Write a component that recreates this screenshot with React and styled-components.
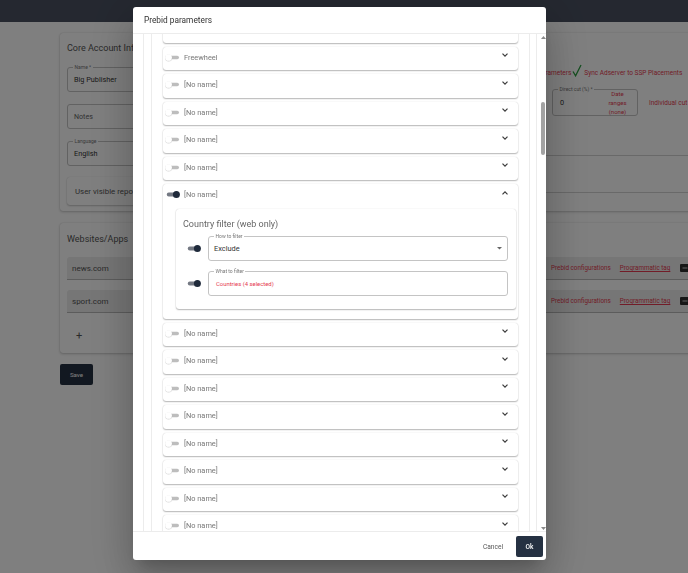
import React from 'react';
import styled, { createGlobalStyle } from 'styled-components';

const RED = '#e53950';

const GlobalStyle = createGlobalStyle`
  *, *::before, *::after { box-sizing: border-box; }
  html, body { margin: 0; padding: 0; background: #fff; overflow: hidden; }
  body { font-family: Roboto, "Liberation Sans", Arial, sans-serif; }
  button { font-family: inherit; cursor: pointer; }
`;

/* ---------- background page ---------- */
const Page = styled.div`
  width: 688px;
  height: 573px;
  overflow: hidden;
  background: #fff;
`;
const TopBar = styled.header`
  height: 22px;
  background: #4a5161;
`;
const Main = styled.main`
  display: flex;
  flex-direction: column;
  align-items: flex-start;
  padding: 11px 0 0 60px;
`;
const Card = styled.section`
  width: 760px;
  flex: none;
  margin-top: ${p => p.$mt || 0}px;
  padding: ${p => p.$pad};
  background: #fff;
  border-radius: 3px;
  box-shadow: 0 1px 3px rgba(0, 0, 0, 0.22), 0 0 1px rgba(0, 0, 0, 0.2);
`;
const CardTitle = styled.h2`
  margin: 0;
  font-size: 9px;
  line-height: 14px;
  font-weight: 400;
  color: #555;
`;
const CoreGrid = styled.div`
  display: grid;
  grid-template-columns: 445px 1fr;
  column-gap: 6px;
`;
const Column = styled.div`
  display: flex;
  flex-direction: column;
  align-items: stretch;
`;
const Outlined = styled.div`
  position: relative;
  flex: none;
  width: ${p => (p.$w ? `${p.$w}px` : 'auto')};
  height: ${p => p.$h || 25}px;
  margin-top: ${p => p.$mt || 0}px;
  padding: 0 ${p => p.$pr ?? 6}px 0 ${p => p.$pl ?? 6}px;
  display: flex;
  align-items: center;
  border: 1px solid #c4c4c4;
  border-radius: 3px;
  background: #fff;
`;
const FieldLabel = styled.span`
  position: absolute;
  top: -3.5px;
  left: 5px;
  padding: 0 1.5px;
  background: #fff;
  font-size: 5px;
  line-height: 5px;
  color: #777;
  white-space: nowrap;
`;
const FieldValue = styled.span`
  flex: 1;
  font-size: ${p => p.$size || 7.3}px;
  color: ${p => p.$color || '#333'};
  white-space: nowrap;
`;
const PaperRow = styled.div`
  margin-top: 11px;
  height: 28px;
  display: flex;
  align-items: center;
  padding-left: 8px;
  background: #fff;
  border-radius: 3px;
  box-shadow: 0 1px 2px rgba(0, 0, 0, 0.22), 0 0 1px rgba(0, 0, 0, 0.18);
  font-size: 7.9px;
  color: #555;
`;
const ActionRow = styled.div`
  margin-top: ${p => p.$mt || 0}px;
  height: ${p => p.$h}px;
  padding-left: ${p => p.$pl || 0}px;
  display: flex;
  align-items: center;
`;
const RedText = styled.a`
  font-size: ${p => p.$size || 6.5}px;
  color: ${RED};
  white-space: nowrap;
  margin-left: ${p => p.$ml || 0}px;
  margin-right: ${p => p.$mr || 0}px;
  text-decoration: ${p => (p.$u ? 'underline' : 'none')};
`;
const DateRanges = styled.span`
  width: 27px;
  font-size: 6px;
  line-height: 9.3px;
  text-align: center;
  color: ${RED};
`;
const SectionBand = styled.div`
  margin-top: 39px;
  height: 38px;
  border-top: 1px solid #d2d2d2;
  border-bottom: 1px solid #d2d2d2;
`;
const SiteRow = styled.div`
  height: 23px;
  margin-top: ${p => p.$mt}px;
  display: flex;
  align-items: center;
  padding-left: 5px;
  background: #ececec;
  border-radius: 3px 3px 0 0;
  border-bottom: 1px solid #b9b9b9;
`;
const SiteName = styled.span`
  width: 479px;
  flex: none;
  font-size: 8px;
  color: #555;
`;
const AddRow = styled.div`
  margin-top: 9px;
  height: 26px;
  display: flex;
  align-items: center;
  padding-left: 9px;
  font-size: 11px;
  color: #555;
`;
const SaveButton = styled.button`
  margin-top: 11px;
  width: 33px;
  height: 21px;
  padding: 0;
  border: 0;
  border-radius: 2px;
  background: #253142;
  color: #fff;
  font-size: 6.2px;
`;

/* ---------- dialog ---------- */
const Overlay = styled.div`
  position: fixed;
  inset: 0;
  background: rgba(0, 0, 0, 0.5);
  display: flex;
  align-items: flex-start;
  padding: 7px 0 0 133px;
`;
const Dialog = styled.div`
  width: 413px;
  height: 553px;
  display: flex;
  flex-direction: column;
  overflow: hidden;
  background: #fff;
  border-radius: 3px;
  box-shadow: 0 11px 15px -7px rgba(0, 0, 0, 0.2), 0 24px 38px 3px rgba(0, 0, 0, 0.14),
    0 9px 46px 8px rgba(0, 0, 0, 0.12);
`;
const DialogTitle = styled.h2`
  flex: none;
  margin: 0;
  height: 27px;
  display: flex;
  align-items: center;
  padding: 0 11px;
  font-size: 8.3px;
  font-weight: 400;
  color: #333;
  border-bottom: 1px solid #ececec;
`;
const DialogBody = styled.div`
  flex: 1;
  min-height: 0;
  display: flex;
`;
const Scroller = styled.div`
  flex: 1;
  min-width: 0;
  overflow: hidden;
  padding-left: 10px;
`;
const Frame = styled.div`
  margin-top: ${p => p.$mt || 0}px;
  padding: 0 ${p => p.$pr}px 0 ${p => p.$pl}px;
  border-left: 1px solid #ececec;
  border-right: 1px solid #ececec;
`;
const List = styled.div`
  display: flex;
  flex-direction: column;
  gap: 4px;
`;
const Acc = styled.div`
  flex: none;
  background: #fff;
  border-radius: 3px;
  box-shadow: 0 1px 1.5px rgba(0, 0, 0, 0.28), 0 0 1px rgba(0, 0, 0, 0.2);
`;
const AccHeader = styled.div`
  height: 23.5px;
  display: flex;
  align-items: center;
  gap: 4px;
  padding: 0 9px 2px 2px;
`;
const AccName = styled.span`
  flex: 1;
  font-size: 7.4px;
  color: #777;
`;
const Chevron = styled.svg`
  flex: none;
  margin-bottom: 4px;
`;
const AccDetails = styled.div`
  padding: 1px 2px 10px 13px;
`;
const Panel = styled.div`
  height: 100px;
  display: flex;
  flex-direction: column;
  padding: 9px 8px 0 0;
  background: #fff;
  border-radius: 3px;
  box-shadow: 0 1px 1.5px rgba(0, 0, 0, 0.28), 0 0 1px rgba(0, 0, 0, 0.2);
`;
const PanelTitle = styled.div`
  padding-left: 7px;
  font-size: 9px;
  line-height: 12px;
  color: #666;
`;
const FilterRow = styled.div`
  margin-top: ${p => p.$mt}px;
  display: flex;
  align-items: center;
  gap: 7px;
  padding-left: 10px;
`;
const FilterField = styled(Outlined)`
  flex: 1;
`;
const ScrollBar = styled.div`
  width: 9px;
  flex: none;
  display: flex;
  flex-direction: column;
  align-items: center;
  padding: 2px 0 1px 3px;
`;
const ScrollTrack = styled.div`
  flex: 1;
  display: flex;
  flex-direction: column;
  align-items: center;
`;
const ScrollThumb = styled.div`
  margin-top: 63px;
  width: 4px;
  height: 53px;
  border-radius: 2px;
  background: #a3a3a3;
`;
const DialogFooter = styled.div`
  flex: none;
  height: 29px;
  display: flex;
  justify-content: flex-end;
  align-items: center;
  gap: 13px;
  padding: 1px 3px 0 0;
  border-top: 1px solid #ececec;
`;
const TextButton = styled.button`
  padding: 0;
  border: 0;
  background: none;
  font-size: 6.6px;
  color: #555;
`;
const PrimaryButton = styled.button`
  width: 27px;
  height: 21px;
  padding: 0;
  border: 0;
  border-radius: 2px;
  background: #253142;
  color: #fff;
  font-size: 6.5px;
  font-weight: 500;
`;

/* ---------- drawings ---------- */
function Toggle({ on }) {
  return (
    <svg width="15" height="9" viewBox="0 0 15 9" style={{ flex: 'none' }}>
      {on ? (
        <>
          <rect x="1.8" y="2.6" width="11" height="3.8" rx="1.9" fill="#747983" />
          <circle cx="11.4" cy="4.5" r="3.5" fill="#1f2a3b" />
        </>
      ) : (
        <>
          <rect x="4.5" y="2.7" width="9.5" height="3.6" rx="1.8" fill="#bdbdbd" />
          <circle cx="3.6" cy="5" r="3.5" fill="rgba(0,0,0,0.16)" />
          <circle cx="3.6" cy="4.5" r="3.35" fill="#fff" />
        </>
      )}
    </svg>
  );
}

function ChevronIcon({ up }) {
  return (
    <Chevron width="8" height="6" viewBox="0 0 8 6">
      <path
        d={up ? 'M1.5 4.3 L4 1.8 L6.5 4.3' : 'M1.5 1.7 L4 4.2 L6.5 1.7'}
        fill="none"
        stroke="#3a3a3a"
        strokeWidth="1.2"
      />
    </Chevron>
  );
}

function Triangle({ up, color = '#8a8a8a', w = 5, h = 3 }) {
  return (
    <svg width={w} height={h} viewBox={`0 0 ${w} ${h}`} style={{ flex: 'none' }}>
      <path d={up ? `M0 ${h} L${w / 2} 0 L${w} ${h} Z` : `M0 0 L${w / 2} ${h} L${w} 0 Z`} fill={color} />
    </svg>
  );
}

function CheckMark() {
  return (
    <svg width="10" height="13" viewBox="0 0 10 13" style={{ margin: '0 2px 4px 1px', flex: 'none' }}>
      <path d="M1 7.5 L3.6 11.8 L9 1" fill="none" stroke="#2a9d3f" strokeWidth="1.3" />
    </svg>
  );
}

function RowIcon() {
  return (
    <svg width="10" height="8" viewBox="0 0 10 8" style={{ flex: 'none' }}>
      <rect x="0" y="0" width="10" height="8" rx="1" fill="#2f2f2f" />
      <path d="M2.5 4 H7.5" stroke="#ddd" strokeWidth="0.9" />
    </svg>
  );
}

const ROWS_BEFORE = ['Freewheel', '[No name]', '[No name]', '[No name]', '[No name]'];
const ROWS_AFTER = Array.from({ length: 8 }, () => '[No name]');

function AccordionRow({ name, on }) {
  return (
    <Acc>
      <AccHeader>
        <Toggle on={on} />
        <AccName>{name}</AccName>
        <ChevronIcon />
      </AccHeader>
    </Acc>
  );
}

export default function App() {
  return (
    <>
      <GlobalStyle />
      <Page>
        <TopBar />
        <Main>
          <Card $pad="8px 7px 6px">
            <CoreGrid>
              <Column>
                <CardTitle>Core Account Info</CardTitle>
                <Outlined $mt={12}>
                  <FieldLabel>Name *</FieldLabel>
                  <FieldValue>Big Publisher</FieldValue>
                </Outlined>
                <Outlined $mt={12}>
                  <FieldValue $size={7.1} $color="#666">Notes</FieldValue>
                </Outlined>
                <Outlined $mt={12}>
                  <FieldLabel>Language</FieldLabel>
                  <FieldValue>English</FieldValue>
                </Outlined>
                <PaperRow>User visible reports</PaperRow>
              </Column>
              <Column>
                <ActionRow $mt={25} $h={13}>
                  <RedText>Prebid parameters</RedText>
                  <CheckMark />
                  <RedText>Sync Adserver to SSP Placements</RedText>
                </ActionRow>
                <ActionRow $mt={10} $h={27} $pl={34}>
                  <Outlined $w={86} $h={27} $pl={7} $pr={6}>
                    <FieldLabel>Direct cut (%) *</FieldLabel>
                    <FieldValue>0</FieldValue>
                    <DateRanges>Date ranges (none)</DateRanges>
                  </Outlined>
                  <RedText $ml={11}>Individual cut</RedText>
                </ActionRow>
                <SectionBand />
              </Column>
            </CoreGrid>
          </Card>

          <Card $mt={12} $pad="9px 7px 5px">
            <CardTitle>Websites/Apps</CardTitle>
            {['news.com', 'sport.com'].map((site, i) => (
              <SiteRow key={site} $mt={i === 0 ? 11 : 10}>
                <SiteName>{site}</SiteName>
                <RedText $size={6.3} $mr={9}>Prebid configurations</RedText>
                <RedText $size={6.3} $mr={10} $u>Programmatic tag</RedText>
                <RowIcon />
              </SiteRow>
            ))}
            <AddRow>+</AddRow>
          </Card>

          <SaveButton>Save</SaveButton>
        </Main>
      </Page>

      <Overlay>
        <Dialog>
          <DialogTitle>Prebid parameters</DialogTitle>
          <DialogBody>
            <Scroller>
              <Frame $pl={7} $pr={6}>
                <Frame $pl={11} $pr={11}>
                  <List style={{ marginTop: -15 }}>
                    <AccordionRow name="[No name]" />
                    {ROWS_BEFORE.map((n, i) => (
                      <AccordionRow key={`b${i}`} name={n} />
                    ))}
                    <Acc>
                      <AccHeader>
                        <Toggle on />
                        <AccName>[No name]</AccName>
                        <ChevronIcon up />
                      </AccHeader>
                      <AccDetails>
                        <Panel>
                          <PanelTitle>Country filter (web only)</PanelTitle>
                          <FilterRow $mt={6.5}>
                            <Toggle on />
                            <FilterField $pl={5} $pr={5}>
                              <FieldLabel>How to filter</FieldLabel>
                              <FieldValue $size={7.4}>Exclude</FieldValue>
                              <Triangle color="#666" w={5} h={2.6} />
                            </FilterField>
                          </FilterRow>
                          <FilterRow $mt={10}>
                            <Toggle on />
                            <FilterField $pl={7}>
                              <FieldLabel>What to filter</FieldLabel>
                              <FieldValue $size={5.9} $color={RED}>Countries (4 selected)</FieldValue>
                            </FilterField>
                          </FilterRow>
                        </Panel>
                      </AccDetails>
                    </Acc>
                    {ROWS_AFTER.map((n, i) => (
                      <AccordionRow key={`a${i}`} name={n} />
                    ))}
                  </List>
                </Frame>
              </Frame>
            </Scroller>
            <ScrollBar>
              <Triangle up />
              <ScrollTrack>
                <ScrollThumb />
              </ScrollTrack>
              <Triangle />
            </ScrollBar>
          </DialogBody>
          <DialogFooter>
            <TextButton>Cancel</TextButton>
            <PrimaryButton>Ok</PrimaryButton>
          </DialogFooter>
        </Dialog>
      </Overlay>
    </>
  );
}
